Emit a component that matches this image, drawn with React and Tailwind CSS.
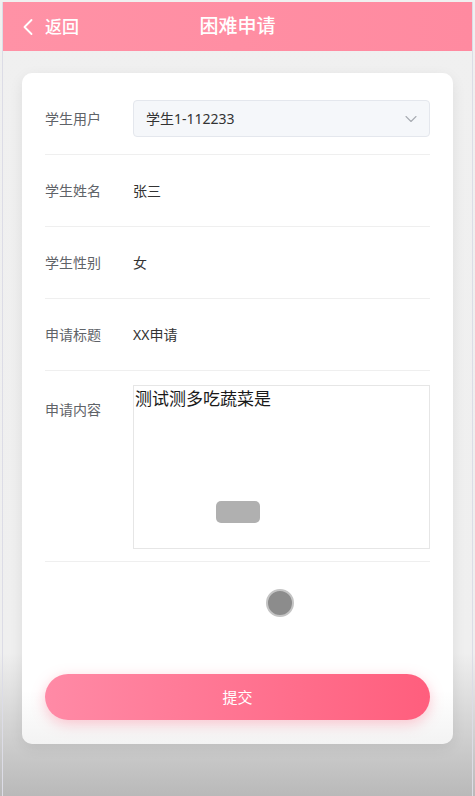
import { ChevronLeft, ChevronDown } from 'lucide-react'

const font = { fontFamily: '"Noto Sans", "Noto Sans CJK SC", sans-serif' }

function Row({ label, children }) {
  return (
    <div className="flex items-center h-[72px] border-b border-[#efefef]">
      <div className="w-[88px] text-[14px] text-[#5f6368]">{label}</div>
      <div className="flex-1 text-[14px] text-[#333]">{children}</div>
    </div>
  )
}

export default function App() {
  return (
    <div
      className="w-[475px] h-[796px] flex flex-col pt-[2px] px-[2px] bg-[linear-gradient(to_bottom,#f0f0f0_0%,#efefef_82%,#b9b9b9_100%)]"
      style={font}
    >
      <div className="flex flex-col flex-1 border-x border-[#dcdce6]">
        <header className="relative h-[49px] flex items-center bg-[linear-gradient(90deg,#ff92a6,#ff8aa0)] text-white">
          <div className="flex items-center pl-[11px] gap-[3px]">
            <ChevronLeft size={28} strokeWidth={1.6} />
            <span className="text-[17px] font-medium">返回</span>
          </div>
          <div className="absolute left-0 right-0 text-center text-[19px] font-medium pointer-events-none">困难申请</div>
        </header>

        <main className="flex-1 px-[19px] pt-[22px]">
          <div className="h-[671px] rounded-[10px] bg-[linear-gradient(to_bottom,#ffffff_92%,#f3f3f3_100%)] shadow-[0_4px_14px_rgba(0,0,0,0.08)] px-[23px] pt-[10px] flex flex-col">
            <div className="flex items-center h-[72px] border-b border-[#efefef]">
              <div className="w-[88px] text-[14px] text-[#5f6368]">学生用户</div>
              <div className="flex-1 h-[37px] flex items-center justify-between rounded-[4px] border border-[#e4e7ed] bg-[#f5f7fa] pl-[12px] pr-[8px]">
                <span className="text-[14px] text-[#333]">学生1-112233</span>
                <ChevronDown size={20} strokeWidth={1.3} className="text-[#a8abb2]" />
              </div>
            </div>
            <Row label="学生姓名">张三</Row>
            <Row label="学生性别">女</Row>
            <Row label="申请标题">XX申请</Row>

            <div className="flex items-start pt-[14px] pb-[12px] border-b border-[#efefef]">
              <div className="w-[88px] text-[14px] text-[#5f6368] pt-[14px]">申请内容</div>
              <div className="relative flex-1 h-[164px] border border-[#e6e6e6] bg-white">
                <div className="text-[17px] leading-[24px] text-[#1a1a1a] pl-[1px] pt-[1px]">测试测多吃蔬菜是</div>
                <div className="absolute left-[82px] top-[115px] w-[44px] h-[22px] rounded-[5px] bg-[#b0b0b0]" />
              </div>
            </div>

            <div className="flex justify-center pt-[27px] pl-[85px]">
              <div className="w-[28px] h-[28px] rounded-full bg-[#8c8c8c] border-[2px] border-[#c4c4c4]" />
            </div>

            <button className="mt-[57px] h-[46px] w-full rounded-full bg-[linear-gradient(90deg,#ff8aa6,#ff5e7d)] text-white text-[15px] shadow-[0_4px_14px_rgba(255,100,130,0.35)]">
              提交
            </button>
          </div>
        </main>
      </div>
    </div>
  )
}
